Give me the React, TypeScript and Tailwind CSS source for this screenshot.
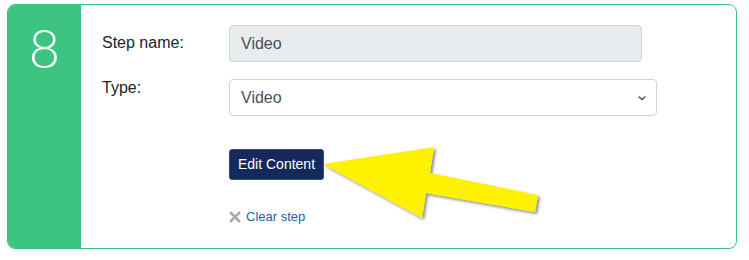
import React from "react";

export default function App() {
  return (
    <div className="relative w-[749px] h-[260px] bg-white pt-[4px] pl-[7px] font-['Liberation_Sans',Arial,sans-serif] text-[#212529]">
      <div className="flex w-[730px] h-[245px] border border-[#3cc480] rounded-[8px] overflow-hidden">
        <div className="w-[73px] bg-[#3cc480] flex justify-center">
          <div className="mt-[11px] text-white text-[54px] leading-[64px] font-light font-['Lato',sans-serif]">8</div>
        </div>
        <div className="flex-1 pl-[21px] pt-[20px]">
          <div className="flex items-start">
            <div className="w-[127px] pt-[6px] text-[16px] leading-[24px]">Step name:</div>
            <div className="w-[413px] h-[37px] bg-[#e9ecef] border border-[#ced4da] rounded-[4px] pl-[11px] flex items-center text-[16px] text-[#495057]">
              Video
            </div>
          </div>
          <div className="flex items-start mt-[17px]">
            <div className="w-[127px] mt-[-3px] text-[16px] leading-[24px]">Type:</div>
            <div className="w-[428px] h-[37px] bg-white border border-[#ced4da] rounded-[4px] pl-[11px] pr-[9px] flex items-center justify-between text-[16px] text-[#495057]">
              <span>Video</span>
              <svg width="10" height="8" viewBox="0 0 10 8">
                <path d="M1.5 2.5 L5 5.5 L8.5 2.5" fill="none" stroke="#555" strokeWidth="1.5" />
              </svg>
            </div>
          </div>
          <div className="ml-[127px] mt-[33px]">
            <div className="inline-flex items-center h-[31px] px-[8px] bg-[#132a5a] border border-[#1d4fa3] rounded-[3px] text-white text-[14px]">
              Edit Content
            </div>
          </div>
          <div className="ml-[127px] mt-[28px] flex items-center text-[13px] leading-[18px] text-[#1a5fb4]">
            <svg width="12" height="12" viewBox="0 0 12 12" className="mr-[5px]">
              <path d="M2 2 L10 10 M10 2 L2 10" stroke="#a8a8a8" strokeWidth="2.6" strokeLinecap="square" />
            </svg>
            <span>Clear step</span>
          </div>
        </div>
      </div>
      <svg className="absolute left-0 top-0 pointer-events-none" width="749" height="260" viewBox="0 0 749 260">
        <defs>
          <filter id="sh" x="-10%" y="-10%" width="130%" height="140%">
            <feDropShadow dx="2" dy="2" stdDeviation="1.5" floodColor="#000" floodOpacity="0.45" />
          </filter>
        </defs>
        <polygon
          points="323,164 434,147 430,173 538,195 535,212 426,193 422,218"
          fill="#fff200"
          filter="url(#sh)"
        />
      </svg>
    </div>
  );
}
